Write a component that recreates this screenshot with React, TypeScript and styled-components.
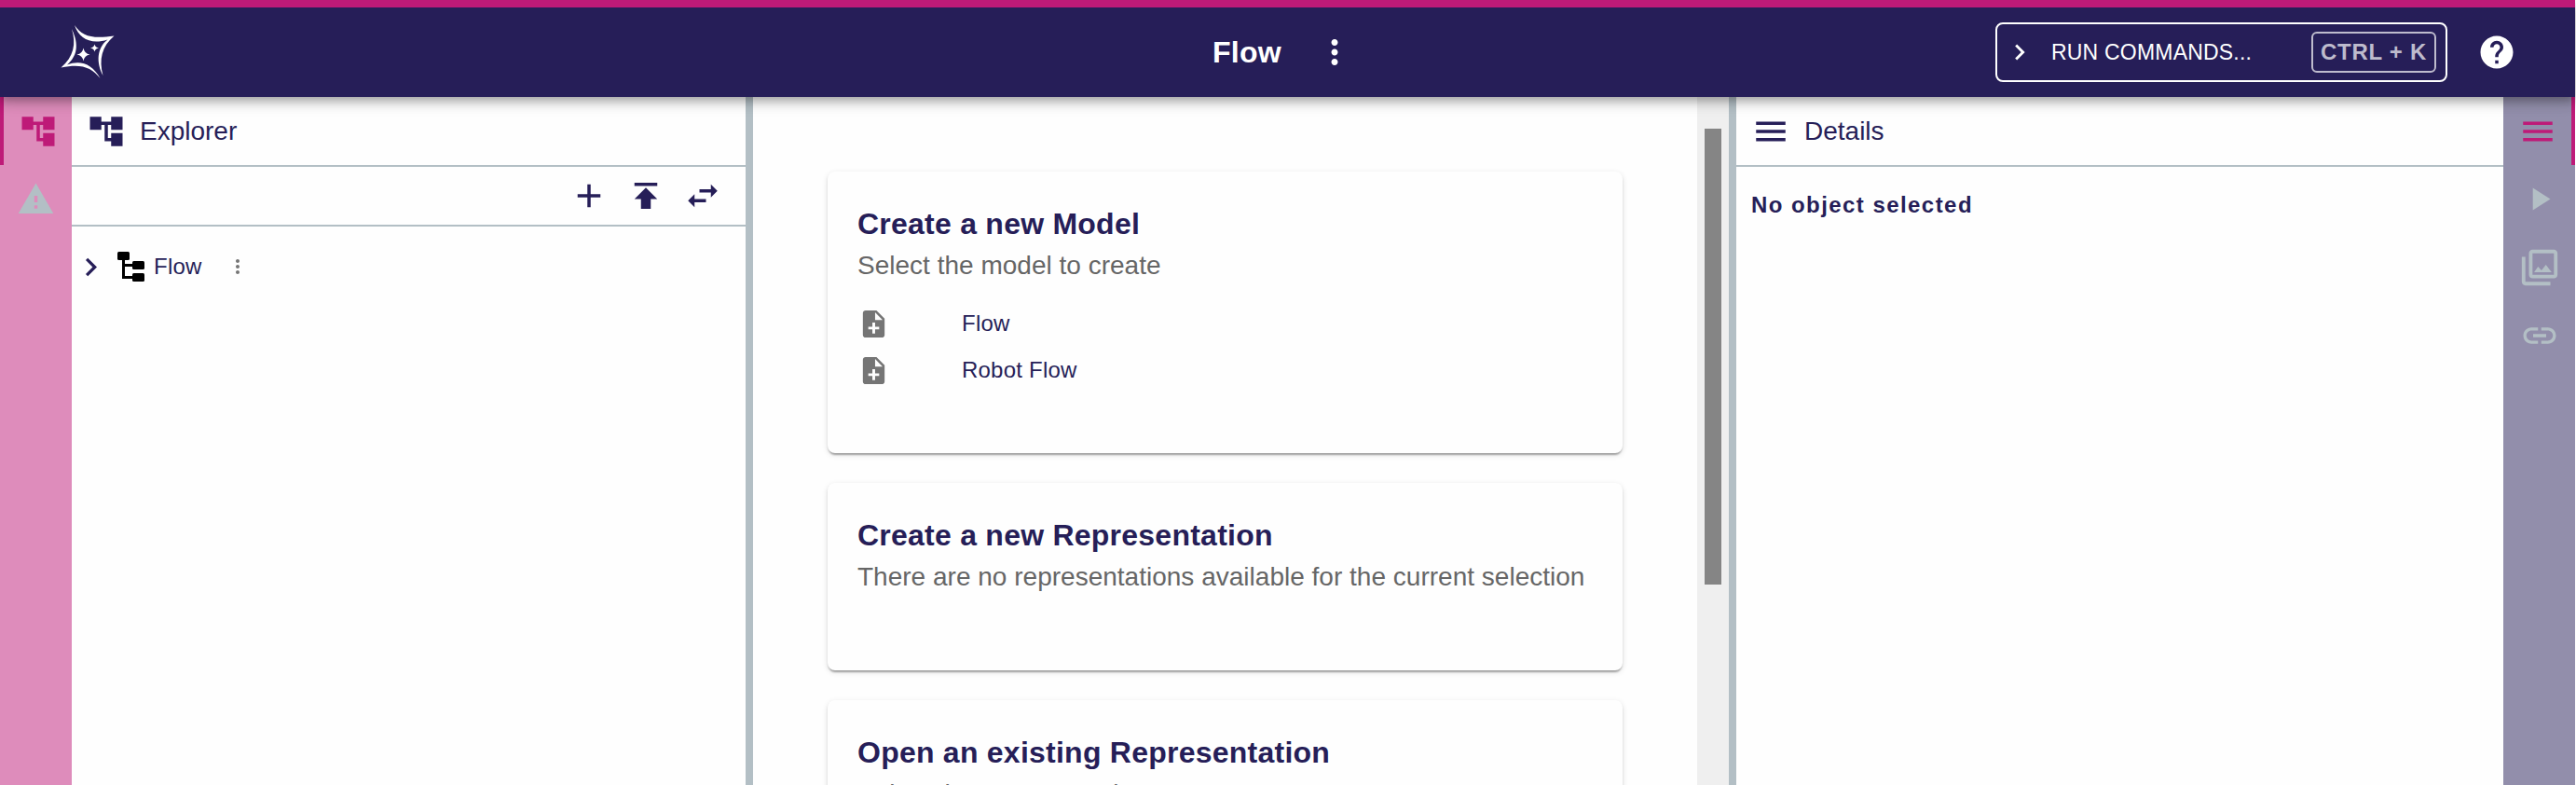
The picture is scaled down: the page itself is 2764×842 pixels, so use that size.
import React from "react";
import styled, { createGlobalStyle } from "styled-components";

const navy = "#261e58";
const pink = "#be1a78";
const grey = "#b3bfc5";

const GlobalStyle = createGlobalStyle`
  * { box-sizing: border-box; }
  body { margin: 0; background: #fefefe; color: ${navy}; font-family: "Liberation Sans", Arial, sans-serif; overflow: hidden; }
  svg { display: block; flex: none; }
`;

const Page = styled.div`
  display: flex;
  flex-direction: column;
  width: 2764px;
  height: 842px;
  padding-right: 1px;
  overflow: hidden;
`;

const Navbar = styled.header`
  position: relative;
  z-index: 2;
  flex: none;
  display: grid;
  grid-template-columns: 1fr auto 1fr;
  align-items: center;
  height: 104px;
  padding: 0 63px 0 64px;
  color: #fff;
  background: ${navy};
  border-top: 8px solid ${pink};
  box-shadow: 0 4px 8px -2px rgba(0, 0, 0, 0.2), 0 8px 10px 0 rgba(0, 0, 0, 0.14), 0 2px 20px 0 rgba(0, 0, 0, 0.12);
`;

const NavTitle = styled.div`
  display: flex;
  align-items: center;
  gap: 36px;
  padding-right: 10px;
`;

const ProjectName = styled.h1`
  margin: 0;
  font-size: 32px;
  line-height: 48px;
  letter-spacing: 0.24px;
`;

const NavActions = styled.div`
  display: flex;
  justify-content: flex-end;
  align-items: center;
  gap: 32px;
`;

const CommandButton = styled.button`
  display: flex;
  align-items: center;
  width: 485px;
  height: 64px;
  padding: 0 10px 0 7px;
  border: 2px solid #fff;
  border-radius: 8px;
  background: transparent;
  color: #fff;
  font: 23px "Liberation Sans", Arial, sans-serif;
`;

const CommandLabel = styled.span`
  flex: 1;
  padding-left: 17px;
  text-align: left;
  letter-spacing: 0.2px;
`;

const Shortcut = styled.kbd`
  display: flex;
  align-items: center;
  justify-content: center;
  width: 134px;
  height: 44px;
  border: 2px solid #bebbcd;
  border-radius: 6px;
  color: #bebbcd;
  font: bold 24px "Liberation Sans", Arial, sans-serif;
  letter-spacing: 0.7px;
`;

const Workbench = styled.main`
  flex: 1;
  min-height: 0;
  display: flex;
`;

const Rail = styled.nav<{ $side: "left" | "right" }>`
  flex: none;
  width: 77px;
  background: ${(p) => (p.$side === "left" ? "#de8cbb" : "#928eab")};
`;

const RailItem = styled.div<{ $side: "left" | "right"; $active?: boolean }>`
  display: flex;
  align-items: center;
  justify-content: center;
  height: 73px;
  color: ${(p) => (p.$active ? pink : grey)};
  border-${(p) => p.$side}: ${(p) => (p.$active ? 4 : 0)}px solid ${pink};
`;

const Panel = styled.section<{ $width: number }>`
  flex: none;
  width: ${(p) => p.$width}px;
`;

const PanelHeader = styled.header`
  display: flex;
  align-items: center;
  gap: 15px;
  height: 75px;
  padding: 0 15px 0 16px;
  border-bottom: 2px solid ${grey};
`;

const PanelTitle = styled.h2`
  margin: 0;
  font-size: 28px;
  font-weight: 400;
`;

const Toolbar = styled.div`
  display: flex;
  align-items: center;
  justify-content: flex-end;
  gap: 19px;
  height: 64px;
  padding-right: 25px;
  border-bottom: 2px solid ${grey};
`;

const TreeRow = styled.div`
  display: flex;
  align-items: center;
  height: 48px;
  margin-top: 19px;
  padding-left: 1px;
  font-size: 24px;
`;

const TreeItem = styled.div`
  display: flex;
  align-items: center;
  gap: 9px;
  padding: 0 26px 0 7px;
  letter-spacing: 0.22px;
`;

const TreeMenu = styled.span`
  color: #757575;
`;

const Splitter = styled.div`
  flex: none;
  width: 8px;
  background: ${grey};
`;

const Editor = styled.section`
  flex: 1;
  min-width: 0;
  display: flex;
  overflow: hidden;
`;

const CardList = styled.div`
  flex: 1;
  min-width: 0;
  display: flex;
  flex-direction: column;
  gap: 32px;
  padding: 80px 80px 0;
`;

const Card = styled.article<{ $height: number }>`
  flex: none;
  height: ${(p) => p.$height}px;
  padding: 32px;
  border-radius: 8px;
  background: #fefefe;
  box-shadow: 0 4px 2px -2px rgba(0, 0, 0, 0.2), 0 2px 2px 0 rgba(0, 0, 0, 0.14), 0 2px 6px 0 rgba(0, 0, 0, 0.12);
`;

const CardTitle = styled.h3`
  margin: 0;
  font-size: 32px;
  line-height: 48px;
  letter-spacing: 0.24px;
`;

const CardText = styled.p`
  margin: 0;
  color: #666;
  font-size: 28px;
  line-height: 42px;
  letter-spacing: 0.01px;
  white-space: nowrap;
`;

const CardItem = styled.div`
  display: flex;
  align-items: center;
  gap: 77px;
  height: 50px;
  font-size: 24px;
  letter-spacing: 0.22px;
  svg { color: #757575; }
`;

const CardItems = styled.div`
  padding-top: 16px;
`;

const ScrollTrack = styled.div`
  flex: none;
  width: 34px;
  padding: 34px 8px 0;
  background: #efefef;
`;

const ScrollThumb = styled.div`
  height: 489px;
  background: #858585;
`;

const EmptyMessage = styled.p`
  margin: 0;
  padding: 25px 16px;
  font-size: 24px;
  font-weight: 700;
  line-height: 32px;
  letter-spacing: 1.44px;
`;

const paths = {
  tree: "M22 11V3h-7v3H9V3H2v8h7V8h2v10h4v3h7v-8h-7v3h-2V8h2v3z",
  warning: "M1 21h22L12 2 1 21zm12-3h-2v-2h2v2zm0-4h-2v-4h2v4z",
  add: "M19 13h-6v6h-2v-6H5v-2h6V5h2v6h6v2z",
  publish: "M5 4v2h14V4H5zm0 10h4v6h6v-6h4l-7-7-7 7z",
  swap: "M6.99 11L3 15l3.99 4v-3H14v-2H6.99v-3zM21 9l-3.99-4v3H10v2h7.01v3L21 9z",
  chevron: "M10 6L8.59 7.41 13.17 12l-4.58 4.59L10 18l6-6z",
  more: "M12 8c1.1 0 2-.9 2-2s-.9-2-2-2-2 .9-2 2 .9 2 2 2zm0 2c-1.1 0-2 .9-2 2s.9 2 2 2 2-.9 2-2-.9-2-2-2zm0 6c-1.1 0-2 .9-2 2s.9 2 2 2 2-.9 2-2-.9-2-2-2z",
  help: "M12 2C6.48 2 2 6.48 2 12s4.48 10 10 10 10-4.48 10-10S17.52 2 12 2zm1 17h-2v-2h2v2zm2.07-7.75l-.9.92C13.45 12.9 13 13.5 13 15h-2v-.5c0-1.1.45-2.1 1.17-2.83l1.24-1.26c.37-.36.59-.86.59-1.41 0-1.1-.9-2-2-2s-2 .9-2 2H8c0-2.21 1.79-4 4-4s4 1.79 4 4c0 .88-.36 1.68-.93 2.25z",
  menu: "M3 18h18v-2H3v2zm0-5h18v-2H3v2zm0-7v2h18V6H3z",
  play: "M8 5v14l11-7z",
  gallery: "M20 4v12H8V4h12m0-2H8c-1.1 0-2 .9-2 2v12c0 1.1.9 2 2 2h12c1.1 0 2-.9 2-2V4c0-1.1-.9-2-2-2zM8.9 14.6L11.1 11.5l1.9 2.1 2.5-3.2 3.2 4.2zM2 6v14c0 1.1.9 2 2 2h14v-2H4V6H2z",
  link: "M3.9 12c0-1.71 1.39-3.1 3.1-3.1h4V7H7c-2.76 0-5 2.24-5 5s2.24 5 5 5h4v-1.9H7c-1.71 0-3.1-1.39-3.1-3.1zM8 13h8v-2H8v2zm9-6h-4v1.9h4c1.71 0 3.1 1.39 3.1 3.1s-1.39 3.1-3.1 3.1h-4V17h4c2.76 0 5-2.24 5-5s-2.24-5-5-5z",
  noteAdd: "M14 2H6c-1.1 0-1.99.9-1.99 2L4 20c0 1.1.89 2 1.99 2H18c1.1 0 2-.9 2-2V8l-6-6zm2 14h-3v3h-2v-3H8v-2h3v-3h2v3h3v2zm-3-7V3.5L18.5 9H13z",
};

const Icon = ({ name, size }: { name: keyof typeof paths; size: number }) => (
  <svg width={size} height={size} viewBox="0 0 24 24" fill="currentColor">
    <path d={paths[name]} />
  </svg>
);

const Logo = () => (
  <svg width="62" height="62" viewBox="64 25 62 62" fill="#fff">
    <path d="M80 27C88 39 99 42 122.5 38.5C109 50 106 64 110.5 81C103 67 104 51 115.5 42.5C98 48 85 42 80 27Z" />
    <path d="M77 31C85 48 83 60 72 69.5C87 64 99 69 107.5 84C98 72 87 68 65.5 72.5C79 61 82 47 77 31Z" />
    <path d="M89.5 51.5Q90.5 57.5 96.5 58.5Q90.5 59.5 89.5 65.5Q88.5 59.5 82.5 58.5Q88.5 57.5 89.5 51.5Z" />
    <path d="M101.5 47.5Q102.2 51 106 51.5Q102.2 52 101.5 55.5Q100.8 52 97 51.5Q100.8 51 101.5 47.5Z" />
  </svg>
);

const ModelIcon = () => (
  <svg width="32" height="32" viewBox="0 0 32 32" fill="#000">
    <rect x="2" y="0" width="13" height="9" rx="1.5" />
    <rect x="18" y="10" width="13" height="9" rx="1.5" />
    <rect x="18" y="23" width="13" height="9" rx="1.5" />
    <path d="M7 8h3v5h9v3h-9v10h9v3H7z" />
  </svg>
);

export default function App() {
  return (
    <>
      <GlobalStyle />
      <Page>
        <Navbar>
          <Logo />
          <NavTitle>
            <ProjectName>Flow</ProjectName>
            <Icon name="more" size={42} />
          </NavTitle>
          <NavActions>
            <CommandButton>
              <Icon name="chevron" size={34} />
              <CommandLabel>RUN COMMANDS...</CommandLabel>
              <Shortcut>CTRL + K</Shortcut>
            </CommandButton>
            <Icon name="help" size={42} />
          </NavActions>
        </Navbar>
        <Workbench>
          <Rail $side="left">
            <RailItem $side="left" $active><Icon name="tree" size={42} /></RailItem>
            <RailItem $side="left"><Icon name="warning" size={41} /></RailItem>
          </Rail>
          <Panel $width={723}>
            <PanelHeader>
              <Icon name="tree" size={42} />
              <PanelTitle>Explorer</PanelTitle>
            </PanelHeader>
            <Toolbar>
              <Icon name="add" size={42} />
              <Icon name="publish" size={42} />
              <Icon name="swap" size={42} />
            </Toolbar>
            <TreeRow>
              <Icon name="chevron" size={39} />
              <TreeItem>
                <ModelIcon />
                Flow
              </TreeItem>
              <TreeMenu><Icon name="more" size={24} /></TreeMenu>
            </TreeRow>
          </Panel>
          <Splitter />
          <Editor>
            <CardList>
              <Card $height={302}>
                <CardTitle>Create a new Model</CardTitle>
                <CardText>Select the model to create</CardText>
                <CardItems>
                  <CardItem><Icon name="noteAdd" size={35} />Flow</CardItem>
                  <CardItem><Icon name="noteAdd" size={35} />Robot Flow</CardItem>
                </CardItems>
              </Card>
              <Card $height={201}>
                <CardTitle>Create a new Representation</CardTitle>
                <CardText>There are no representations available for the current selection</CardText>
              </Card>
              <Card $height={201}>
                <CardTitle>Open an existing Representation</CardTitle>
                <CardText>Select the representation to open</CardText>
              </Card>
            </CardList>
            <ScrollTrack><ScrollThumb /></ScrollTrack>
          </Editor>
          <Splitter />
          <Panel $width={823}>
            <PanelHeader>
              <Icon name="menu" size={42} />
              <PanelTitle>Details</PanelTitle>
            </PanelHeader>
            <EmptyMessage>No object selected</EmptyMessage>
          </Panel>
          <Rail $side="right">
            <RailItem $side="right" $active><Icon name="menu" size={42} /></RailItem>
            <RailItem $side="right"><Icon name="play" size={41} /></RailItem>
            <RailItem $side="right"><Icon name="gallery" size={46} /></RailItem>
            <RailItem $side="right"><Icon name="link" size={42} /></RailItem>
          </Rail>
        </Workbench>
      </Page>
    </>
  );
}
